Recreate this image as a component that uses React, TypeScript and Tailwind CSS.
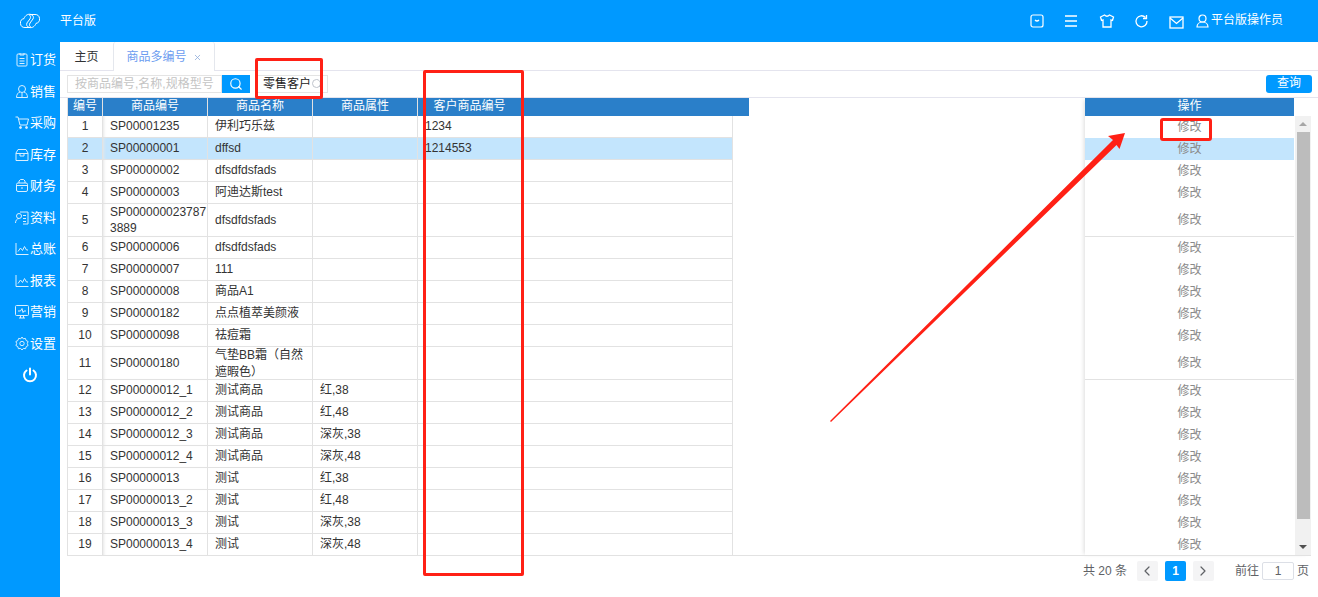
import { ChevronLeft, ChevronRight, Search, X } from "lucide-react";

type Row = {
  no: number;
  code: React.ReactNode;
  name: React.ReactNode;
  attr?: string;
  custom?: string;
  tall?: boolean;
  active?: boolean;
};

const rows: Row[] = [
  { no: 1, code: "SP00001235", name: "伊利巧乐兹", custom: "1234" },
  { no: 2, code: "SP00000001", name: "dffsd", custom: "1214553", active: true },
  { no: 3, code: "SP00000002", name: "dfsdfdsfads" },
  { no: 4, code: "SP00000003", name: "阿迪达斯test" },
  {
    no: 5,
    code: (
      <>
        SP000000023787
        <br />
        3889
      </>
    ),
    name: "dfsdfdsfads",
    tall: true,
  },
  { no: 6, code: "SP00000006", name: "dfsdfdsfads" },
  { no: 7, code: "SP00000007", name: "111" },
  { no: 8, code: "SP00000008", name: "商品A1" },
  { no: 9, code: "SP00000182", name: "点点植萃美颜液" },
  { no: 10, code: "SP00000098", name: "祛痘霜" },
  {
    no: 11,
    code: "SP00000180",
    name: (
      <>
        气垫BB霜<span className="font-['Noto_Sans_CJK_TC']">（</span>自然
        <br />
        遮暇色<span className="font-['Noto_Sans_CJK_TC']">）</span>
      </>
    ),
    tall: true,
  },
  { no: 12, code: "SP00000012_1", name: "测试商品", attr: "红,38" },
  { no: 13, code: "SP00000012_2", name: "测试商品", attr: "红,48" },
  { no: 14, code: "SP00000012_3", name: "测试商品", attr: "深灰,38" },
  { no: 15, code: "SP00000012_4", name: "测试商品", attr: "深灰,48" },
  { no: 16, code: "SP00000013", name: "测试", attr: "红,38" },
  { no: 17, code: "SP00000013_2", name: "测试", attr: "红,48" },
  { no: 18, code: "SP00000013_3", name: "测试", attr: "深灰,38" },
  { no: 19, code: "SP00000013_4", name: "测试", attr: "深灰,48" },
];

const menu = ["订货", "销售", "采购", "库存", "财务", "资料", "总账", "报表", "营销", "设置"];

function MenuIcon({ i }: { i: number }) {
  const paths = [
    <>
      <rect x="2" y="2" width="10" height="12" rx="1" />
      <path d="M5 1v2h4V1M4.500 6.500h5M4.500 9h5M4.500 11.500h5" />
    </>,
    <>
      <circle cx="7" cy="5" r="3.500" />
      <path d="M1.500 13.500c0-3 1.500-5 3.500-5.500M12.500 13.500c0-3-1.500-5-3.500-5.500M1.500 13.500h11M7 9v4.500" />
    </>,
    <>
      <path d="M0.500 2h2.500l2 8h7l1.500-6H3.500" />
      <circle cx="5.500" cy="12.500" r="1" fill="white" />
      <circle cx="11.500" cy="12.500" r="1" fill="white" />
    </>,
    <>
      <path d="M3 2.500h8l2 3.500v7.500H1V6z" />
      <path d="M1 6.500h12M5 6.500v2.500h4V6.500" />
    </>,
    <>
      <rect x="1.500" y="5" width="11" height="8.500" rx="1.500" />
      <path d="M4 5V3l1.500-1.500h3L10 3v2M1.500 7.500h11M7 9v2" />
    </>,
    <>
      <path d="M5 2h8v12H8M8 5.500h3M8 8.500h3M8 11.500h3" />
      <circle cx="4" cy="6" r="2.500" />
      <path d="M0.500 13c0-2.500 1.500-4.500 3.500-4.500" />
    </>,
    <>
      <path d="M1 2v11.500h12.500" />
      <path d="M3 10.500l2.500-3.500 2 2.500 2-4 2 3.500h1.500" />
    </>,
    <>
      <path d="M1 2v11.500h12.500" />
      <path d="M3 10.500l2.500-3.500 2 2.500 2-4 2 3.500h1.500" />
    </>,
    <>
      <rect x="0.500" y="1.500" width="13" height="10" rx="1" />
      <path d="M4 14h6M5.500 11.500v2.500M8.500 11.500v2.500M3 7h2.500l1.500-2.500 1 4 1-1.500h2" />
    </>,
    <>
      <path d="M7 1l1.200 1.800 2.200-.4.700 2.100 2 1-.8 2 .8 2-1.900 1.100-.6 2.100-2.200-.3L7 14l-1.400-1.600-2.200.3-.6-2.100L.9 9.500l.8-2-.8-2 2-1 .7-2.100 2.200.4z" />
      <circle cx="7" cy="7.500" r="2.200" />
    </>,
  ];
  return (
    <svg width="14" height="15" viewBox="0 0 14 15" fill="none" stroke="white" strokeWidth="1" opacity="0.85">
      {paths[i]}
    </svg>
  );
}

function Sidebar() {
  return (
    <div className="w-[60px] shrink-0 flex flex-col pt-[2px] text-white text-[13px]">
      {menu.map((m, i) => (
        <div key={m} className="h-[31.5px] flex items-center gap-[1px] w-full pl-[15px]">
          <MenuIcon i={i} />
          <span>{m}</span>
        </div>
      ))}
      <svg className="mt-[8px] ml-[22px]" width="16" height="16" viewBox="0 0 16 16" fill="none" stroke="white" strokeWidth="2" strokeLinecap="round">
        <path d="M8 1.500v6M4.500 3.500a6 6 0 1 0 7 0" />
      </svg>
    </div>
  );
}

function Header() {
  return (
    <div className="h-[42px] flex items-center text-white text-[12px]">
      <svg className="ml-[19px]" width="22" height="18" viewBox="0 0 22 18" fill="none" stroke="white" strokeWidth="1">
        <path d="M11 15.500H6a4.500 4.500 0 0 1-1-8.900C6 3.500 9 1.500 12 2.500c2 .7 3 2.500 2 4.500l-3 4c-1 2-.5 3.500 1 4.300" />
        <path d="M11 2.500h5a4.500 4.500 0 0 1 1 8.900c-1 3-4 5-7 4-2-.7-3-2.500-2-4.500l3-4c1-2 .5-3.500-1-4.300" />
      </svg>
      <span className="ml-[19px]">平台版</span>
      <div className="ml-auto flex items-center mr-[35px]">
        <svg width="14" height="14" viewBox="0 0 14 14" fill="none" stroke="white" strokeWidth="1.200">
          <rect x="1" y="1" width="12" height="12" rx="2" />
          <path d="M5 6q2 2 4 0" />
        </svg>
        <svg className="ml-[20px]" width="14" height="14" viewBox="0 0 14 14" stroke="white" strokeWidth="1.300">
          <path d="M1 2h12M1 7h12M1 12h12" />
        </svg>
        <svg className="ml-[21px]" width="16" height="14" viewBox="0 0 16 14" fill="none" stroke="white" strokeWidth="1.300">
          <path d="M5.500 1L1.500 3l1 3.500 1.500-.5v7h8V6l1.500.5 1-3.500-4-2q-2.500 2.500-5 0z" />
        </svg>
        <svg className="ml-[19px]" width="14" height="14" viewBox="0 0 14 14" fill="none" stroke="white" strokeWidth="1.300">
          <path d="M11.500 3.500a5.500 5.500 0 1 0 1.500 3.500" />
          <path d="M12.500 1v3.500H9" />
        </svg>
        <svg className="ml-[21px] mt-[3px]" width="15" height="13" viewBox="0 0 15 13" fill="none" stroke="white" strokeWidth="1.300">
          <rect x="1" y="1" width="13" height="11" />
          <path d="M1 2l6.500 5.500L14 2" />
        </svg>
        <svg className="ml-[12px]" width="13" height="14" viewBox="0 0 13 14" fill="none" stroke="white" strokeWidth="1.200">
          <circle cx="6.500" cy="4.500" r="3.500" />
          <path d="M1 13c0-3 2.500-5 5.500-5s5.500 2 5.500 5z" />
        </svg>
        <span className="ml-[2px] -mt-[2px]">平台版操作员</span>
      </div>
    </div>
  );
}

function TableRow({ row }: { row: Row }) {
  const bg = row.active ? "bg-[#c3e5fd]" : "";
  const offset = row.tall ? "" : "pb-[1px]";
  return (
    <div className={`flex border-b border-[#e2e2e2] w-[666px] ${row.tall ? "h-[33px]" : "h-[22px]"} ${bg}`}>
      <div className={`w-[36px] shrink-0 border-l border-r border-[#e2e2e2] flex items-center justify-center ${offset}`}>{row.no}</div>
      <div className={`w-[105px] shrink-0 border-r border-[#e2e2e2] flex items-center pl-[7px] leading-[16px] whitespace-nowrap shadow-[inset_3px_0_3px_-2px_#e6e6e6] ${offset}`}>
        <div>{row.code}</div>
      </div>
      <div className={`w-[105px] shrink-0 border-r border-[#e2e2e2] flex items-center pl-[7px] leading-[16px] whitespace-nowrap ${offset}`}>
        <div>{row.name}</div>
      </div>
      <div className={`w-[105px] shrink-0 border-r border-[#e2e2e2] flex items-center pl-[7px] ${offset}`}>{row.attr}</div>
      <div className={`w-[315px] shrink-0 border-r border-[#e2e2e2] flex items-center pl-[7px] ${offset}`}>{row.custom}</div>
    </div>
  );
}

function HeaderCell({ w, label }: { w: string; label: string }) {
  return <div className={`${w} shrink-0 text-center leading-[17px] border-r border-[#e2e2e2]`}>{label}</div>;
}

function Pager() {
  return (
    <div className="h-[41px] flex items-center justify-end pr-[9px] pb-[11px] text-[12px] text-[#606266] -mt-[1px]">
      <span>共 20 条</span>
      <div className="ml-[10px] w-[21px] h-[20px] bg-[#f4f4f5] rounded-[2px] flex items-center justify-center">
        <ChevronLeft size={16} strokeWidth={1.8} />
      </div>
      <div className="ml-[7px] w-[21px] h-[20px] bg-[#0099ff] rounded-[2px] text-white font-bold flex items-center justify-center">1</div>
      <div className="ml-[7px] w-[21px] h-[20px] bg-[#f4f4f5] rounded-[2px] flex items-center justify-center">
        <ChevronRight size={16} strokeWidth={1.8} />
      </div>
      <span className="ml-[21px]">前往</span>
      <div className="ml-[3px] w-[32px] h-[18px] border border-[#dcdfe6] rounded-[2px] flex items-center justify-center">1</div>
      <span className="ml-[3px]">页</span>
    </div>
  );
}

export default function App() {
  return (
    <div className="relative w-[1318px] h-[597px] overflow-hidden bg-[#0099ff] font-['Liberation_Sans','Noto_Sans_CJK_SC',sans-serif]">
      <Header />
      <div className="flex h-[555px]">
        <Sidebar />
        <div className="flex-1 bg-white flex flex-col text-[12px] text-[#333]">
          {/* tabs */}
          <div className="h-[29px] flex border-b border-[#e4e4ee]">
            <div className="w-[53px] text-center leading-[30px] text-[#303133]">主页</div>
            <div className="w-[102px] h-[29px] pt-[1px] bg-white border-l border-r border-[#e4e7ed] rounded-t-[3px] flex items-center justify-center gap-[6px] text-[#6b9cf0]">
              商品多编号
              <X size={9} className="text-[#8aa8d8] mt-[1px]" />
            </div>
          </div>
          {/* toolbar */}
          <div className="h-[27px] flex items-center pl-[7px] pr-[6px] border-b border-[#e4e4ee]">
            <div className="w-[155px] h-[18px] border border-[#e4e4e4] text-[#c4c4c4] leading-[16px] pl-[7px] whitespace-nowrap overflow-hidden">按商品编号,名称,规格型号</div>
            <div className="w-[28px] h-[18px] bg-[#0099ff] flex items-center justify-center">
              <Search size={14} className="text-white" />
            </div>
            <div className="ml-[6px] w-[72px] h-[18px] border border-[#e4e4e4] flex items-center pl-[6px] text-[#222] whitespace-nowrap">
              零售客户
              <Search size={12} className="shrink-0 text-[#c0c4cc]" />
            </div>
            <div className="ml-auto w-[46px] h-[18px] rounded-[3px] bg-[#0099ff] text-white text-center leading-[17px]">查询</div>
          </div>
          {/* table */}
          <div className="flex flex-1 pl-[7px] pr-[7px] min-h-0">
            <div className="relative flex-1 min-w-0 border-b border-[#e2e2e2] h-[458px]">
              <div className="flex w-[682px] bg-[#2a7fc9] text-white h-[18px] border-l border-[#e2e2e2]">
                <HeaderCell w="w-[35px]" label="编号" />
                <HeaderCell w="w-[105px]" label="商品编号" />
                <HeaderCell w="w-[105px]" label="商品名称" />
                <HeaderCell w="w-[105px]" label="商品属性" />
                <div className="w-[103px] text-center leading-[17px]">客户商品编号</div>
              </div>
              {rows.map((r) => (
                <TableRow key={r.no} row={r} />
              ))}
            </div>
            <div className="w-[226px] shrink-0 h-[458px] flex shadow-[-3px_0_4px_-2px_#dddddd] border-b border-[#e2e2e2]">
              <div className="w-[209px]">
                <div className="bg-[#2a7fc9] text-white h-[18px] text-center leading-[17px]">操作</div>
                {rows.map((r) => (
                  <div
                    key={r.no}
                    className={`flex items-center justify-center text-[#8a8a8a] border-b ${r.tall ? "h-[33px] border-[#e2e2e2]" : "h-[22px] border-transparent"} ${r.active ? "bg-[#c3e5fd]" : ""}`}
                  >
                    修改
                  </div>
                ))}
              </div>
              <div className="flex-1 bg-[#f1f1f1] flex flex-col items-center mt-[18px] border-l border-white">
                <div className="h-[16px] flex items-center justify-center">
                  <div className="border-x-[4px] border-x-transparent border-b-[4px] border-b-[#a6a6a6]" />
                </div>
                <div className="w-[13px] h-[387px] bg-[#bcbcbc]" />
                <div className="mt-auto h-[16px] flex items-center justify-center">
                  <div className="border-x-[4px] border-x-transparent border-t-[4px] border-t-[#505050]" />
                </div>
              </div>
            </div>
          </div>
          <Pager />
        </div>
      </div>

      {/* annotations drawn over the screenshot */}
      <div className="absolute left-[255px] top-[58px] w-[68px] h-[41px] border-[3px] border-[#ff2015] rounded-[2px]" />
      <div className="absolute left-[423px] top-[70px] w-[101px] h-[506px] border-[3px] border-[#ff2015] rounded-[2px]" />
      <div className="absolute left-[1160px] top-[118px] w-[52px] h-[23px] border-[3px] border-[#ff2015] rounded-[3px]" />
      <svg className="absolute left-[825px] top-[130px]" width="305" height="295" viewBox="0 0 305 295">
        <path d="M5 291L288 10L283 6L300 3L294.500 19L291.500 15L6 292z" fill="#ff2015" />
      </svg>
    </div>
  );
}
